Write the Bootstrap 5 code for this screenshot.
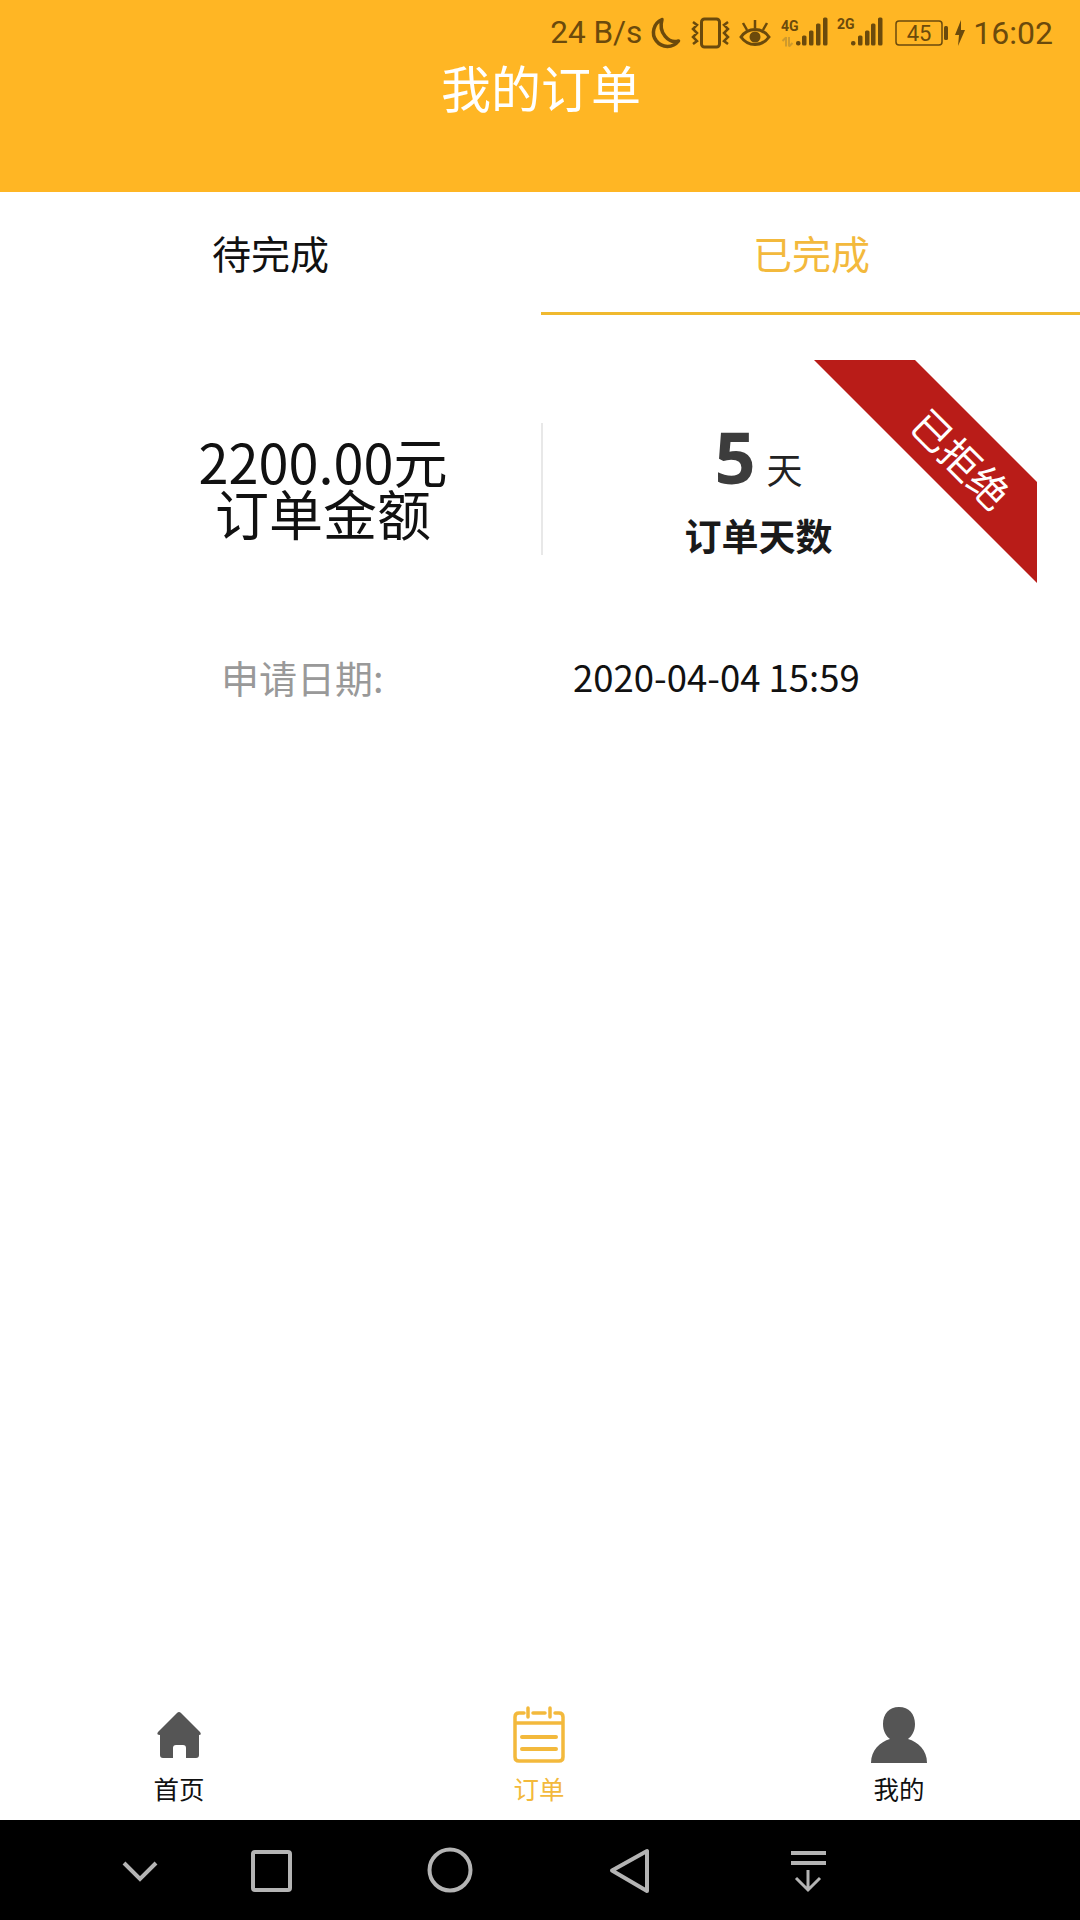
<!DOCTYPE html>
<html lang="zh">

<head>
    <meta charset="UTF-8">
    <meta name="viewport" content="width=device-width, initial-scale=1.0">
    <title>我的订单</title>
    <link href="https://cdn.jsdelivr.net/npm/bootstrap@5.3.3/dist/css/bootstrap.min.css" rel="stylesheet">
    <style>
        html, body { height: 100%; }
        body { font-family: "Noto Sans CJK SC", "Noto Sans", sans-serif; background: #fff; color: #111; }
        .app-screen { width: 1080px; height: 1920px; overflow: hidden; }

        /* header + status bar */
        .app-header { height: 192px; background: #ffb624; }
        .status-row { height: 64px; padding-right: 27px; padding-top: 1px; color: #6b4a0c; font-family: "Roboto", sans-serif; font-size: 32px; }
        .status-row svg { display: block; margin-right: 10px; flex: none; overflow: visible; }
        .status-speed { margin-right: 7px; font-size: 31.5px; }
        .status-row svg.gap-moon { margin-right: 12px; }
        .status-row svg.gap-net { margin-right: 11px; }
        .status-row svg.gap-signal { margin-right: 14px; }
        .status-row svg.gap-batt { margin-right: 7px; }
        .status-row svg.gap-bolt { margin-right: 8px; }
        .net-label { font-family: "Roboto", sans-serif; font-size: 14px; font-weight: 700; fill: #6b4a0c; }
        .app-title { font-size: 50px; line-height: 60px; color: #fff; margin: -8px 0 0 2px; }

        /* tabs */
        .order-tabs { height: 123px; }
        .order-tab { width: 541px; font-size: 39px; line-height: 120px; text-align: center; color: #111; }
        .order-tab.active-tab { width: 539px; padding-left: 2px; color: #f3b93c; border-bottom: 3px solid #f0b92f; }

        /* order */
        .order-box { padding-top: 108px; }
        .order-half { height: 132px; }
        .order-left { width: 543px; border-right: 2px solid #e8e8e8; padding-left: 105px; font-size: 54px; line-height: 52px; padding-top: 12px; color: #111; }
        .order-right { width: 537px; padding-right: 106px; }
        .days-line { line-height: 80px; height: 80px; color: #3c3c3c; margin-top: -7px; }
        .days-num { font-size: 72px; font-weight: 700; font-family: "Noto Sans", sans-serif; }
        .days-unit { font-size: 36px; color: #222; margin-left: 11px; }
        .days-label { font-size: 37px; font-weight: 700; line-height: 50px; color: #1a1a1a; margin-top: 14px; }

        .ribbon-shape { position: absolute; left: 814px; top: 360px; width: 223px; height: 223px; background: #b91c18; clip-path: polygon(0 0, 101px 0, 223px 122px, 223px 223px); }
        .ribbon-text { position: absolute; left: 892px; top: 428px; width: 140px; line-height: 60px; text-align: center; font-size: 40px; color: #fff; transform: rotate(45deg); }

        .date-row { margin-top: 94px; line-height: 56px; }
        .date-label { width: 573px; padding-left: 221px; font-size: 38px; color: #999; }
        .date-value { font-size: 36.5px; color: #111; }

        /* bottom tabs */
        .bottom-tabs { height: 120px; margin-left: -1px; }
        .bottom-tab { width: 360px; padding-top: 4px; font-size: 25.5px; line-height: 36px; color: #111; }
        .bottom-tab svg { display: block; height: 60px; margin-bottom: 6px; }
        .bottom-tab.active-tab { color: #f3b93c; }

        /* android keys */
        .key-bar { height: 100px; background: #000; }
        .key-bar svg { display: block; position: absolute; left: 0; top: 0; }
    </style>
</head>

<body>
    <div class="app-screen d-flex flex-column position-relative">

        <!-- Header -->
        <div class="app-header">
            <div class="status-row d-flex justify-content-end align-items-center">
                <span class="status-speed">24 B/s</span>
                <svg class="gap-moon" width="31" height="32" viewBox="0 0 31 32"><path d="M13 2.500A14 14 0 1 0 29.500 24C20 27 9 16 13 2.500Z" fill="none" stroke="#6b4a0c" stroke-width="3.500" stroke-linejoin="round"/></svg>
                <svg width="37" height="32" viewBox="0 0 37 32" fill="none" stroke="#6b4a0c" stroke-width="3"><rect x="9.500" y="2" width="18" height="28" rx="3"/><path d="M1 5l4 3-4 4 4 4-4 4 4 4-4 3M36 5l-4 3 4 4-4 4 4 4-4 4 4 3" stroke-width="2.500"/></svg>
                <svg width="32" height="32" viewBox="0 0 32 32" fill="none" stroke="#6b4a0c" stroke-width="3"><path d="M2 20C9 10 23 10 30 20C23 30 9 30 2 20Z"/><circle cx="16" cy="20" r="5.500" fill="#6b4a0c" stroke="none"/><path d="M16 11V3M8 13L4 6M24 13l4-7" stroke-width="2.500"/></svg>
                <svg class="gap-net" width="45" height="32" viewBox="0 0 45 32">
                    <text x="0" y="13.500" class="net-label">4G</text>
                    <path d="M5 29.500V20M1.500 24L5 20.500M8 20V29.500M8 29.500L11.500 26" fill="none" stroke="#cf9a2c" stroke-width="2"/>
                    <g fill="#6b4a0c"><rect x="15" y="24" width="4.500" height="4.500" rx="2"/><rect x="21" y="18.500" width="4.500" height="10" rx="1.500"/><rect x="28" y="13.500" width="4.500" height="15" rx="1.500"/><rect x="35" y="6.500" width="4.500" height="22" rx="1.500"/><rect x="42" y="0.500" width="4.500" height="28" rx="1.500"/></g>
                </svg>
                <svg class="gap-signal" width="44" height="32" viewBox="0 0 44 32">
                    <text x="0" y="11.500" class="net-label">2G</text>
                    <g fill="#6b4a0c"><rect x="14" y="24" width="4.500" height="4.500" rx="2"/><rect x="21" y="18.500" width="4.500" height="10" rx="1.500"/><rect x="28" y="13.500" width="4.500" height="15" rx="1.500"/><rect x="34" y="6.500" width="4.500" height="22" rx="1.500"/><rect x="41" y="0.500" width="4.500" height="28" rx="1.500"/></g>
                </svg>
                <svg class="gap-batt" width="53" height="28" viewBox="0 0 53 28"><rect x="1" y="2" width="46" height="24" rx="3" fill="none" stroke="#6b4a0c" stroke-width="1.500"/><text x="24" y="22" font-size="22" text-anchor="middle" font-family="Roboto, sans-serif" fill="#6b4a0c">45</text><rect x="49" y="7" width="4" height="14" rx="1.500" fill="#6b4a0c"/></svg>
                <svg class="gap-bolt" width="10" height="26" viewBox="0 0 10 26"><path d="M6 0L0 15h4L3 26l7-16H6Z" fill="#6b4a0c"/></svg>
                <span>16:02</span>
            </div>
            <div class="app-title text-center">我的订单</div>
        </div>

        <!-- Tabs -->
        <div class="order-tabs d-flex">
            <div class="order-tab">待完成</div>
            <div class="order-tab active-tab">已完成</div>
        </div>

        <!-- Order -->
        <div class="order-box flex-grow-1">
            <div class="d-flex">
                <div class="order-half order-left text-center">
                    <div>2200.00元</div>
                    <div>订单金额</div>
                </div>
                <div class="order-half order-right text-center">
                    <div class="days-line"><span class="days-num">5</span><span class="days-unit">天</span></div>
                    <div class="days-label">订单天数</div>
                </div>
            </div>
            <div class="date-row d-flex">
                <div class="date-label">申请日期:</div>
                <div class="date-value">2020-04-04 15:59</div>
            </div>
        </div>
        <div class="ribbon-shape"></div>
        <div class="ribbon-text">已拒绝</div>

        <!-- Bottom tabs -->
        <div class="bottom-tabs d-flex">
            <div class="bottom-tab d-flex flex-column align-items-center">
                <svg width="48" viewBox="0 0 48 60"><path d="M22 9Q24 7 26 9L45 28Q47 31 44 31V51Q44 54 41 54H31V44Q31 41 28 41H21Q18 41 18 44V54H8Q5 54 5 51V31Q1 31 3 28Z" fill="#555"/></svg>
                <span>首页</span>
            </div>
            <div class="bottom-tab active-tab d-flex flex-column align-items-center">
                <svg width="54" viewBox="0 0 54 60" fill="none" stroke="#f3b93c" stroke-width="3.500"><path d="M12 9H7Q3 9 3 13V53Q3 57 7 57H47Q51 57 51 53V13Q51 9 47 9H43M21 9H33" stroke-linecap="round"/><path d="M16 4V13M38 4V13" stroke-linecap="round"/><path d="M3 19H51"/><path d="M10 33H44M10 45H44" stroke-width="4" stroke-linecap="round"/></svg>
                <span>订单</span>
            </div>
            <div class="bottom-tab d-flex flex-column align-items-center">
                <svg width="58" viewBox="0 0 58 60"><path d="M29 3C39 3 45 10 45 20C45 27 42 32 38 35C48 38 57 46 57 59H1C1 46 10 38 20 35C16 32 13 27 13 20C13 10 19 3 29 3Z" fill="#555"/></svg>
                <span>我的</span>
            </div>
        </div>

        <!-- Android keys -->
        <div class="key-bar position-relative">
            <svg width="1080" height="100" viewBox="0 0 1080 100" fill="none" stroke="#b4b4b4" stroke-width="4">
                <path d="M124 43L140 59L156 43"/>
                <rect x="253" y="32" width="37" height="38" rx="2"/>
                <circle cx="450" cy="50" r="20.500"/>
                <path d="M647 31V71L612 50.500Z" stroke-linejoin="round"/>
                <path d="M791 33H826M791 43H826" stroke-width="4"/>
                <path d="M808 50V69M796 58L808 70L820 58" stroke-width="3"/>
            </svg>
        </div>
    </div>

    <script src="https://cdn.jsdelivr.net/npm/bootstrap@5.3.3/dist/js/bootstrap.bundle.min.js"></script>
</body>

</html>
